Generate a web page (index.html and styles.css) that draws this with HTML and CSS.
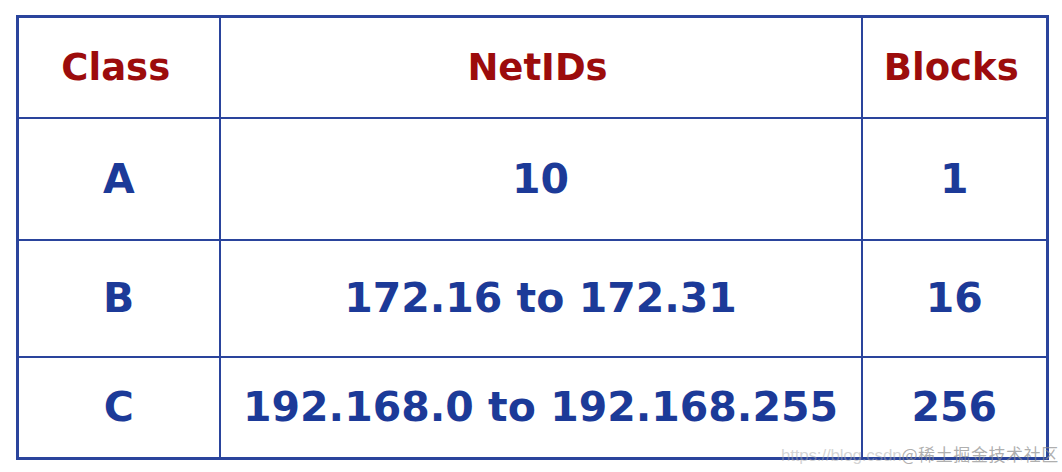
FILE: index.html
```html
<!DOCTYPE html>
<html>
<head>
<meta charset="utf-8">
<link rel="stylesheet" href="styles.css">
</head>
<body>
<div class="page">
  <table class="grid">
    <colgroup>
      <col class="c1">
      <col class="c2">
      <col class="c3">
    </colgroup>
    <tr class="head">
      <th>Class</th>
      <th>NetIDs</th>
      <th>Blocks</th>
    </tr>
    <tr class="ra">
      <td>A</td>
      <td>10</td>
      <td>1</td>
    </tr>
    <tr class="rb">
      <td>B</td>
      <td>172.16 to 172.31</td>
      <td>16</td>
    </tr>
    <tr class="rc">
      <td>C</td>
      <td>192.168.0 to 192.168.255</td>
      <td>256</td>
    </tr>
  </table>
  <div class="mark"><span class="url">https://blog.csdn</span><span class="site">@稀土掘金技术社区</span></div>
</div>
</body>
</html>
```
FILE: styles.css
```css
html, body {
  margin: 0;
  padding: 0;
  background: #ffffff;
}
.page {
  position: relative;
  width: 1062px;
  height: 472px;
  padding: 15px 0 0 16px;
  box-sizing: border-box;
}
.grid {
  border-collapse: collapse;
  border: 3px solid #2a449c;
  width: 1033px;
  table-layout: fixed;
  font-family: "DejaVu Sans", sans-serif;
  font-weight: bold;
}
.c1 { width: 202px; }
.c2 { width: 642px; }
.c3 { width: 186px; }
.grid th, .grid td {
  border: 2px solid #2a449c;
  text-align: center;
  vertical-align: middle;
  padding: 0;
  font-size: 41px;
  white-space: nowrap;
}
.grid th {
  color: #9c0c0c;
  font-size: 37px;
  padding-right: 6px;
}
.grid td {
  color: #1c3a98;
}
.head { height: 101px; }
.ra { height: 122px; }
.rb { height: 117px; }
.rc { height: 102px; }
.mark {
  position: absolute;
  left: 781px;
  top: 443px;
  font-family: "Liberation Sans", "Noto Sans CJK SC", sans-serif;
  font-size: 17px;
  line-height: 22px;
  white-space: nowrap;
}
.url {
  color: rgba(170, 170, 170, 0.5);
  letter-spacing: -0.2px;
}
.site {
  color: rgba(140, 140, 140, 0.7);
  font-family: "Noto Sans CJK SC", sans-serif;
  letter-spacing: 0.6px;
}
```
